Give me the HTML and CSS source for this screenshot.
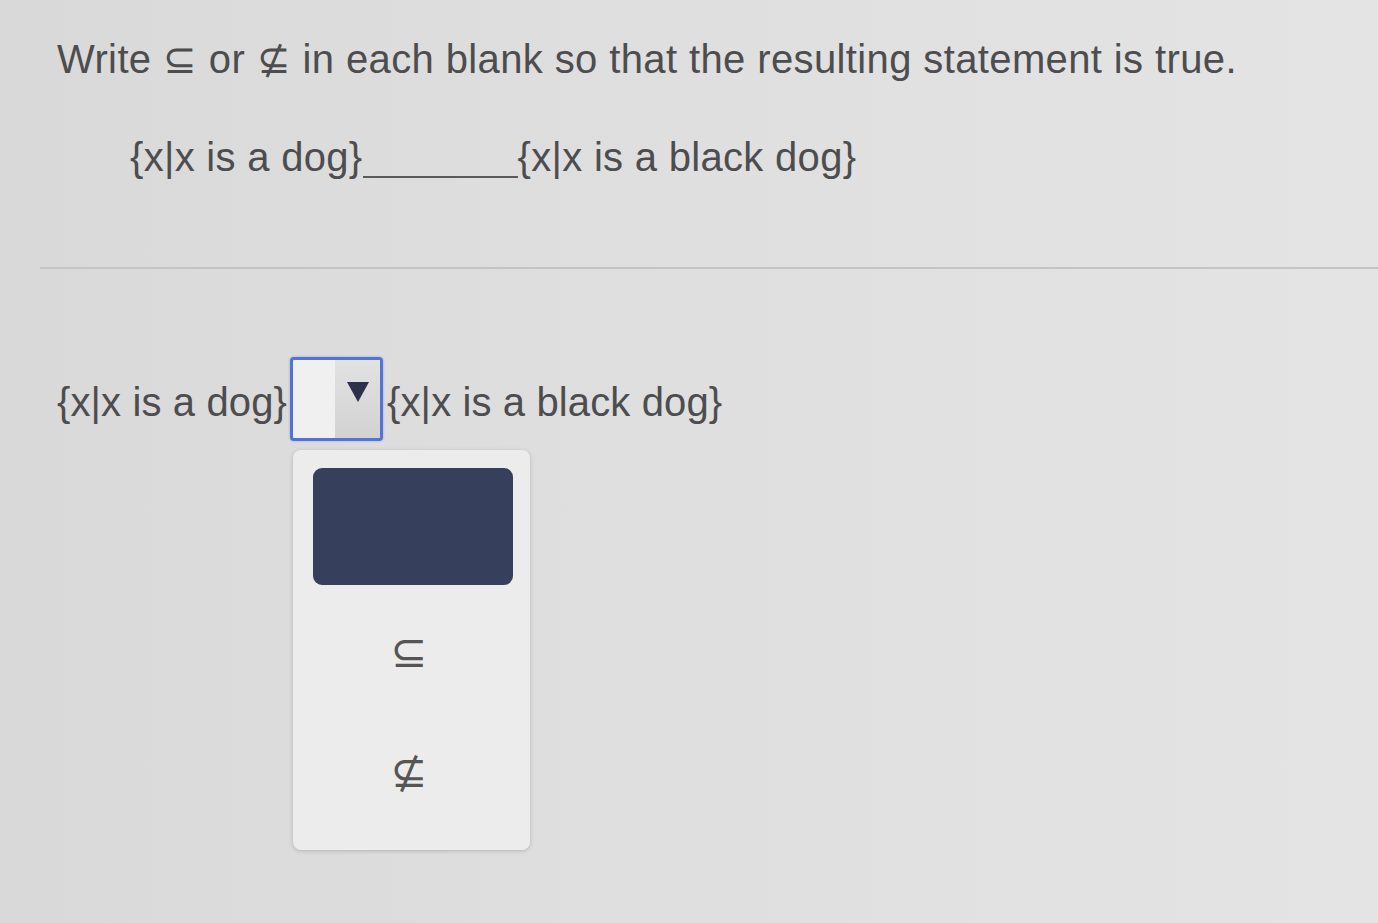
FILE: index.html
```html
<!DOCTYPE html>
<html>
<head>
<meta charset="utf-8">
<link rel="stylesheet" href="styles.css">
</head>
<body>
<div class="page">
  <div class="prompt">Write ⊆ or ⊈ in each blank so that the resulting statement is true.</div>
  <div class="statement"><span>{x|x is a dog}</span><span class="blank"></span><span>{x|x is a black dog}</span></div>
  <div class="divider"></div>
  <div class="answer">
    <span>{x|x is a dog}</span>
    <div class="select-wrap">
      <div class="select">
        <div class="select-value"></div>
        <div class="select-btn"><span class="tri"></span></div>
      </div>
      <div class="menu">
        <div class="menu-item selected"></div>
        <div class="menu-item">⊆</div>
        <div class="menu-item">⊈</div>
      </div>
    </div>
    <span>{x|x is a black dog}</span>
  </div>
</div>
</body>
</html>
```
FILE: styles.css
```css
html, body {
  margin: 0;
  padding: 0;
}
body {
  width: 1378px;
  height: 923px;
  overflow: hidden;
  background: linear-gradient(90deg, #d9d9d9 0%, #dedede 40%, #e4e4e4 100%);
  font-family: "Liberation Sans", Arial, sans-serif;
  color: #4d4d4f;
}
.page {
  padding-top: 35px;
}
.prompt {
  font-size: 40px;
  line-height: 48px;
  letter-spacing: 0.38px;
  padding-left: 57px;
  white-space: nowrap;
}
.statement {
  display: flex;
  align-items: baseline;
  font-size: 40px;
  line-height: 48px;
  letter-spacing: 0.3px;
  padding-left: 130px;
  margin-top: 50px;
}
.blank {
  display: block;
  width: 155px;
  align-self: flex-end;
  margin-bottom: 3px;
  border-bottom: 2px solid #5a5a5a;
}
.divider {
  margin-top: 86px;
  margin-left: 40px;
  height: 2px;
  background: #c4c4c4;
}
.answer {
  display: flex;
  align-items: center;
  font-size: 40px;
  line-height: 48px;
  letter-spacing: 0.12px;
  padding-left: 57px;
  margin-top: 88px;
}
.answer > span {
  position: relative;
  top: 3px;
}
.select-wrap {
  position: relative;
  margin: 0 4px 0 3px;
}
.select {
  display: flex;
  width: 87px;
  height: 78px;
  border: 3px solid #5473d6;
  border-radius: 4px;
  background: #f0f0f0;
  box-shadow: 0 0 2px rgba(60, 90, 200, 0.5);
}
.select-value {
  flex: 1;
}
.select-btn {
  width: 45px;
  display: flex;
  justify-content: center;
  padding-top: 22px;
  box-sizing: border-box;
  background: linear-gradient(180deg, #e2e2e2 0%, #d2d2d2 100%);
}
.tri {
  width: 0;
  height: 0;
  border-left: 11px solid transparent;
  border-right: 11px solid transparent;
  border-top: 20px solid #2e2f48;
}
.menu {
  position: absolute;
  left: 3px;
  top: 93px;
  width: 237px;
  height: 400px;
  box-sizing: border-box;
  padding: 18px 17px 0 20px;
  background: #ececec;
  border-radius: 8px;
  box-shadow: 0 1px 4px rgba(0, 0, 0, 0.18);
  display: flex;
  flex-direction: column;
}
.menu-item {
  height: 120px;
  display: flex;
  align-items: center;
  justify-content: center;
  padding-top: 14px;
  padding-right: 8px;
  box-sizing: border-box;
  font-size: 44px;
  color: #555;
  font-family: "DejaVu Sans", sans-serif;
}
.menu-item.selected {
  height: 117px;
  padding: 0;
  background: #363f5c;
  border-radius: 9px;
}
```
